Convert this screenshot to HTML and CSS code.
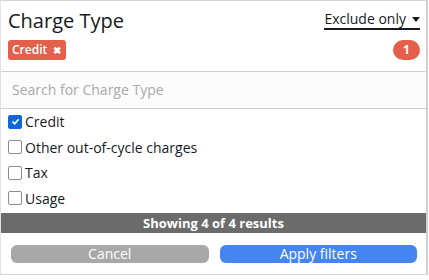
FILE: index.html
```html
<!DOCTYPE html>
<html>
<head>
<meta charset="utf-8">
<link rel="stylesheet" href="styles.css">
</head>
<body>
<div class="panel">
  <div class="head">
    <div class="row">
      <div class="title">Charge Type</div>
      <div class="mode">Exclude only <span class="caret"></span></div>
    </div>
    <div class="row row2">
      <span class="chip">Credit <span class="x">&#10006;</span></span>
      <span class="badge">1</span>
    </div>
  </div>
  <div class="search">Search for Charge Type</div>
  <ul class="list">
    <li><span class="cb on"><svg viewBox="0 0 14 14" width="14" height="14"><path d="M3.2 7.2 L6 10 L11 4.2" fill="none" stroke="#fff" stroke-width="2"/></svg></span>Credit</li>
    <li><span class="cb"></span>Other out-of-cycle charges</li>
    <li><span class="cb"></span>Tax</li>
    <li><span class="cb"></span>Usage</li>
  </ul>
  <div class="status">Showing 4 of 4 results</div>
  <div class="actions">
    <button class="btn cancel">Cancel</button>
    <button class="btn apply">Apply filters</button>
  </div>
</div>
</body>
</html>
```
FILE: styles.css
```css
html, body { margin: 0; padding: 0; background: #fff; }
body { font-family: "Open Sans", "Noto Sans", sans-serif; color: #16191f; }
.panel {
  box-sizing: border-box;
  width: 428px;
  border-top: 1px solid #d5d5d5;
  border-left: 1px solid #e2e2e2;
  border-right: 2px solid #d0d0d0;
  border-bottom: 1px solid #d5d5d5;
}
.head { padding: 8px 6px 11px 7px; border-bottom: 1px solid #d0d0d0; }
.row { display: flex; justify-content: space-between; align-items: center; }
.title { font-size: 20px; line-height: 24px; }
.mode { font-size: 14px; line-height: 18px; border-bottom: 2px solid #16191f; margin-top: -3px; display: flex; align-items: center; gap: 6px; }
.caret { width: 0; height: 0; border-left: 4.5px solid transparent; border-right: 4.5px solid transparent; border-top: 5px solid #16191f; margin-top: 1px; }
.row2 { margin-top: 7px; }
.chip { background: #e5604a; color: #fff; font-size: 12px; line-height: 20px; padding: 0 5px 0 4px; border-radius: 3px; font-weight: 600; }
.chip .x { font-size: 10px; margin-left: 3px; }
.badge { background: #e5604a; color: #fff; font-size: 12px; font-weight: 700; line-height: 20px; width: 27px; text-align: center; border-radius: 10px; }
.search { height: 36px; line-height: 36px; padding-left: 11px; color: #a7a9ab; font-size: 14px; background: #fcfcfc; border-bottom: 1px solid #d0d0d0; }
.list { list-style: none; margin: 0; padding: 0 0 2px 0; }
.list li { display: flex; align-items: center; height: 25.5px; font-size: 14px; padding-left: 7px; gap: 3px; }
.cb { box-sizing: border-box; width: 14px; height: 14px; border: 1.5px solid #878b92; border-radius: 2px; display: inline-flex; align-items: center; justify-content: center; }
.cb.on { background: #1366d8; border-color: #1366d8; }
.cb svg { width: 11px; height: 11px; }
.status { background: #6b6b6b; color: #fff; font-weight: 700; font-size: 13px; text-align: center; line-height: 20px; }
.actions { display: flex; gap: 11px; padding: 12px 9px 11px 10px; }
.btn { flex: 1; border: none; border-radius: 6px; height: 18px; font-family: inherit; font-size: 14px; color: #fff; padding: 0; line-height: 18px; }
.cancel { background: #a8a8a8; }
.apply { background: #4485ef; }
```
